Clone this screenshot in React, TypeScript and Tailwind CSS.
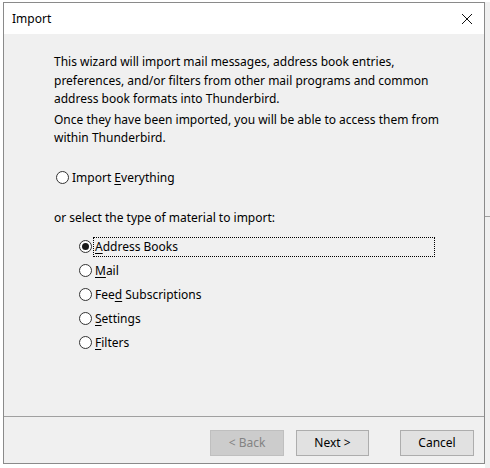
import React from "react"

const font = { fontFamily: '"Noto Sans", "Segoe UI", Arial, sans-serif' }

function Radio({ checked }: { checked?: boolean }) {
  return (
    <span className="flex h-[13px] w-[13px] shrink-0 items-center justify-center rounded-full border border-[#333333] bg-white">
      {checked && <span className="h-[7px] w-[7px] rounded-full bg-[#1a1a1a]" />}
    </span>
  )
}

// label text with an underlined access key
function Key({ pre = "", k, post = "" }: { pre?: string; k: string; post?: string }) {
  return (
    <span>
      {pre}
      <span className="underline underline-offset-2">{k}</span>
      {post}
    </span>
  )
}

const kinds = [
  { pre: "", k: "M", post: "ail" },
  { pre: "Fee", k: "d", post: " Subscriptions" },
  { pre: "", k: "S", post: "ettings" },
  { pre: "", k: "F", post: "ilters" },
]

export default function App() {
  return (
    <div className="flex h-[468px] w-[490px] overflow-hidden bg-white pt-[2px] text-[12px] text-black" style={font}>
      <div className="w-[3px] shrink-0" />
      <div className="flex h-[462px] w-[482px] shrink-0 flex-col border border-[#8a8a8a] bg-[#f0f0f0]">
        {/* Title bar */}
        <div className="flex h-[31px] shrink-0 items-center justify-between bg-white pl-[8px] pr-[10px]">
          <span className="text-[12px]">Import</span>
          <svg width="12" height="12" viewBox="0 0 12 12" className="mr-[1px]">
            <path d="M1 1 L11 11 M11 1 L1 11" stroke="#111" strokeWidth="1" fill="none" />
          </svg>
        </div>

        {/* Content */}
        <div className="flex-1 pl-[50px] pr-[40px] pt-[19px] leading-[18.5px]">
          <p>
            This wizard will import mail messages, address book entries,
            <br />
            preferences, and/or filters from other mail programs and common
            <br />
            address book formats into Thunderbird.
          </p>
          <p className="mt-[2px]">
            Once they have been imported, you will be able to access them from
            <br />
            within Thunderbird.
          </p>

          <div className="mt-[21px] flex items-center gap-[3px] pl-[2px]">
            <Radio />
            <Key pre="Import " k="E" post="verything" />
          </div>

          <div className="mt-[22px]">or select the type of material to import:</div>

          <div className="mt-[9px] flex flex-col gap-[4px] pl-[25px]">
            <div className="flex items-center gap-[1px]">
              <Radio checked />
              <span className="w-[342px] border border-dotted border-black pl-[1px] leading-[18px]">
                <Key k="A" post="ddress Books" />
              </span>
            </div>
            {kinds.map((it) => (
              <div key={it.post} className="flex items-center gap-[3px] leading-[20px]">
                <Radio />
                <Key pre={it.pre} k={it.k} post={it.post} />
              </div>
            ))}
          </div>
        </div>

        {/* Footer */}
        <div className="flex h-[47px] shrink-0 items-start gap-[12px] border-t border-[#a0a0a0] pl-[206px] pt-[13px]">
          <button className="h-[26px] w-[74px] border border-[#bfbfbf] bg-[#cccccc] text-[#838383]">&lt; Back</button>
          <button className="h-[26px] w-[73px] border border-[#adadad] bg-[#e1e1e1]">Next &gt;</button>
          <button className="ml-[19px] h-[26px] w-[74px] border border-[#adadad] bg-[#e1e1e1]">Cancel</button>
        </div>
      </div>
      {/* edge of the window behind */}
      <div className="flex flex-1 flex-col bg-[#f0f0f0]">
        <div className="h-[214px]" />
        <div className="h-[1px] bg-[#a0a0a0]" />
      </div>
    </div>
  )
}
